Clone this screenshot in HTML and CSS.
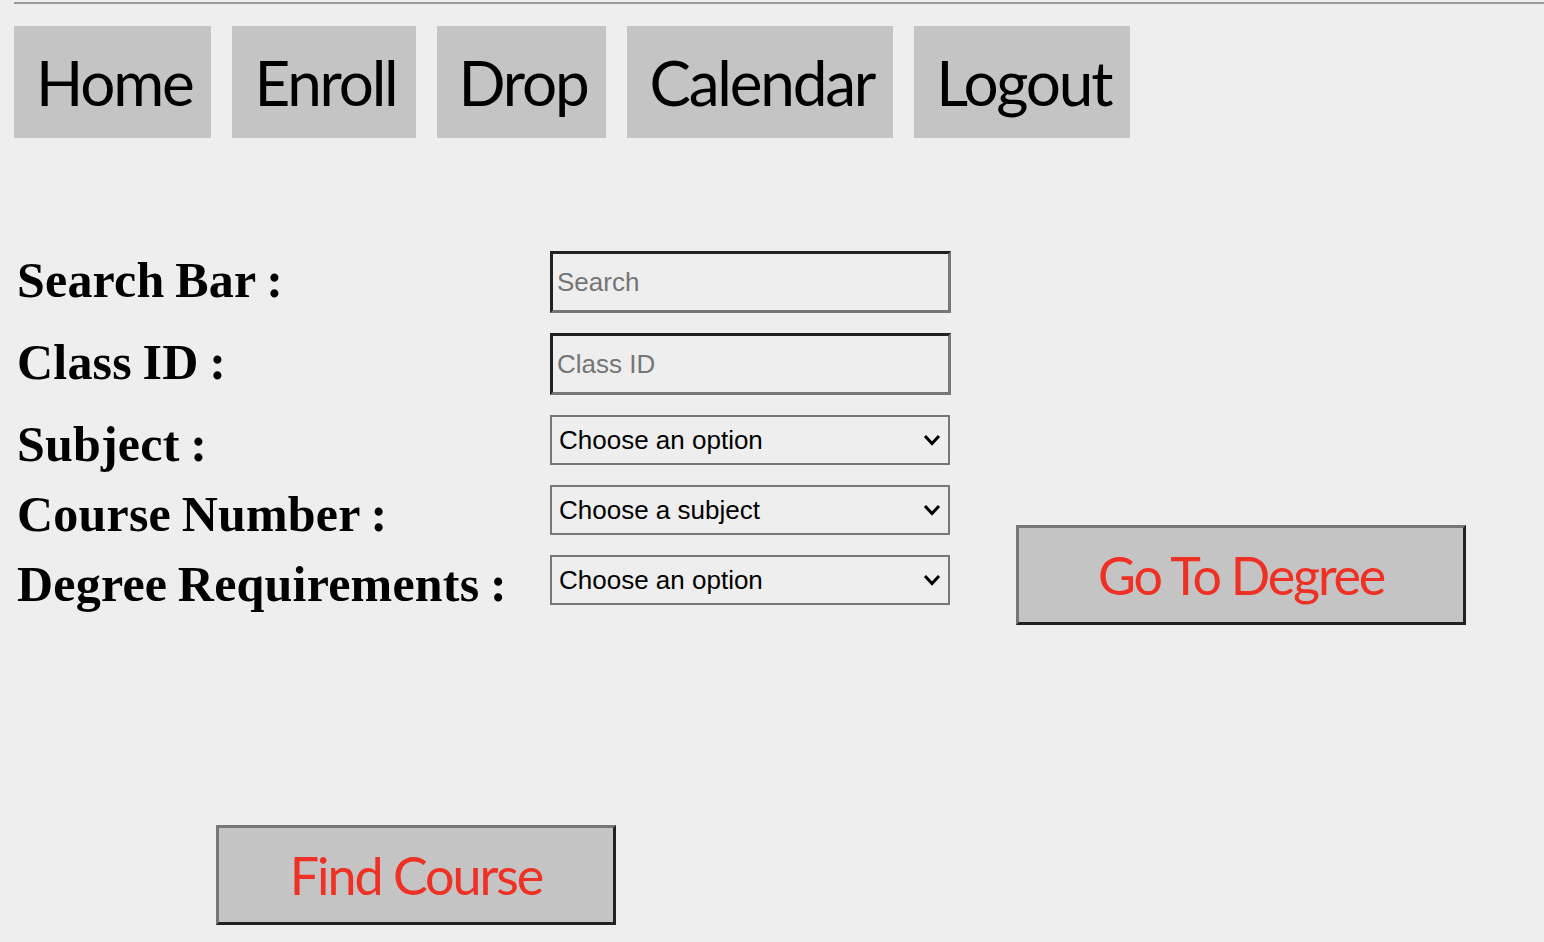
FILE: index.html
```html
<!DOCTYPE html>
<html lang="en">
<head>
<meta charset="utf-8">
<title>Course Search</title>
<link rel="stylesheet" href="styles.css">
</head>
<body>
<div class="rule"></div>
<nav class="nav">
  <a class="nav-item" href="#">Home</a>
  <a class="nav-item" href="#">Enroll</a>
  <a class="nav-item" href="#">Drop</a>
  <a class="nav-item" href="#">Calendar</a>
  <a class="nav-item" href="#">Logout</a>
</nav>
<main class="main">
  <form class="form">
    <label class="label">Search Bar :</label>
    <input class="text-input" type="text" placeholder="Search">
    <label class="label">Class ID :</label>
    <input class="text-input" type="text" placeholder="Class ID">
    <label class="label">Subject :</label>
    <select class="select"><option>Choose an option</option></select>
    <label class="label">Course Number :</label>
    <select class="select"><option>Choose a subject</option></select>
    <label class="label">Degree Requirements :</label>
    <select class="select"><option>Choose an option</option></select>
  </form>
  <button class="action action-degree" type="button">Go To Degree</button>
</main>
<button class="action action-find" type="button">Find Course</button>
</body>
</html>
```
FILE: styles.css
```css
html, body {
  margin: 0;
  padding: 0;
  background: #eeeeee;
}

body {
  width: 1544px;
  height: 942px;
  overflow: hidden;
}

.rule {
  margin: 2px 0 0 14px;
  border-top: 2px solid #9a9a9a;
}

.nav {
  display: flex;
  gap: 21px;
  margin-top: 22px;
  padding-left: 14px;
}

.nav-item {
  display: flex;
  align-items: center;
  height: 112px;
  padding: 0 19px 0 22px;
  background: #c4c4c4;
  color: #000;
  text-decoration: none;
  font-family: "Lato", sans-serif;
  font-size: 62px;
  letter-spacing: -2.2px;
}

.main {
  display: flex;
  align-items: flex-start;
  margin-top: 113px;
  padding-left: 17px;
}

.form {
  display: grid;
  grid-template-columns: 533px 401px;
  grid-template-rows: 62px 62px 50px 50px 50px;
  row-gap: 20px;
}

.label {
  align-self: start;
  font-family: "Liberation Serif", serif;
  font-weight: bold;
  font-size: 50px;
  line-height: 58px;
  letter-spacing: 0.2px;
  word-spacing: -2px;
  color: #000;
  white-space: nowrap;
}

.text-input {
  box-sizing: border-box;
  width: 401px;
  height: 62px;
  margin: 0;
  padding: 0 4px;
  border: 3px solid;
  border-color: #222 #777 #777 #222;
  background: #eeeeee;
  font-family: "Liberation Sans", Arial, sans-serif;
  font-size: 26px;
  color: #000;
  outline: none;
}

.text-input::placeholder {
  color: #757575;
}

.select {
  box-sizing: border-box;
  width: 400px;
  height: 50px;
  margin: 0;
  padding: 0 34px 0 7px;
  border: 2px solid #777;
  border-radius: 0;
  -webkit-appearance: none;
  appearance: none;
  background-color: #eeeeee;
  background-image: url("data:image/svg+xml;utf8,<svg xmlns='http://www.w3.org/2000/svg' width='18' height='12' viewBox='0 0 18 12'><polyline points='2,2 9,9.5 16,2' fill='none' stroke='black' stroke-width='3'/></svg>");
  background-repeat: no-repeat;
  background-position: right 7px center;
  font-family: "Liberation Sans", Arial, sans-serif;
  font-size: 26px;
  color: #000;
}

.action {
  box-sizing: border-box;
  height: 100px;
  margin: 0;
  padding: 0;
  border: 3px solid;
  border-color: #777 #222 #222 #777;
  background: #c4c4c4;
  color: #ee3124;
  font-family: "Lato", sans-serif;
  cursor: pointer;
}

.action-degree {
  width: 450px;
  margin-left: 65px;
  margin-top: 274px;
  font-size: 52px;
  letter-spacing: -2.2px;
}

.action-find {
  display: block;
  width: 400px;
  margin-top: 200px;
  margin-left: 216px;
  font-size: 52px;
  letter-spacing: -2px;
}
```
